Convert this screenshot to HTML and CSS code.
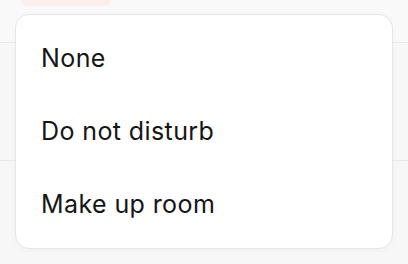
FILE: index.html
```html
<!DOCTYPE html>
<html lang="en">
<head>
    <meta charset="UTF-8">
    <meta name="viewport" content="width=device-width, initial-scale=1.0">
    <title>Room status</title>
    <link rel="stylesheet" href="styles.css">
</head>
<body>
    <!-- Page rows behind the open menu -->
    <div class="page">
        <div class="row row-top">
            <span class="pill"></span>
        </div>
        <div class="row row-mid"></div>
        <div class="row row-bottom"></div>
    </div>

    <!-- Dropdown menu -->
    <ul class="menu">
        <li class="menu-item">None</li>
        <li class="menu-item">Do not disturb</li>
        <li class="menu-item">Make up room</li>
    </ul>
</body>
</html>
```

FILE: styles.css
```css
/* Page */
body {
    font-family: Inter, "Noto Sans", sans-serif;
    background-color: #f7f7f7;
    margin: 0;
    padding: 0;
    width: 408px;
    height: 264px;
    overflow: hidden;
    position: relative;
}
.row {
    border-bottom: 1px solid #e8e8e8;
}
.row-top {
    height: 42px;
    background-color: #f9f9f9;
}
.row-mid {
    height: 117px;
    background-color: #f7f7f7;
}
.row-bottom {
    height: 104px;
}
.pill {
    display: block;
    width: 90px;
    height: 6px;
    margin-left: 21px;
    background-color: #fdeeee;
    border-radius: 0 0 10px 10px;
}

/* Menu */
.menu {
    position: absolute;
    top: 14px;
    left: 15px;
    width: 376px;
    margin: 0;
    padding: 7px 0;
    list-style: none;
    background-color: #fff;
    border: 1px solid #e6e6e6;
    border-radius: 14px;
    box-shadow: 0 2px 6px rgba(0, 0, 0, 0.03);
}
.menu-item {
    height: 73px;
    line-height: 73px;
    padding-left: 25px;
    font-size: 25px;
    letter-spacing: 0.4px;
    color: #151515;
}
```
